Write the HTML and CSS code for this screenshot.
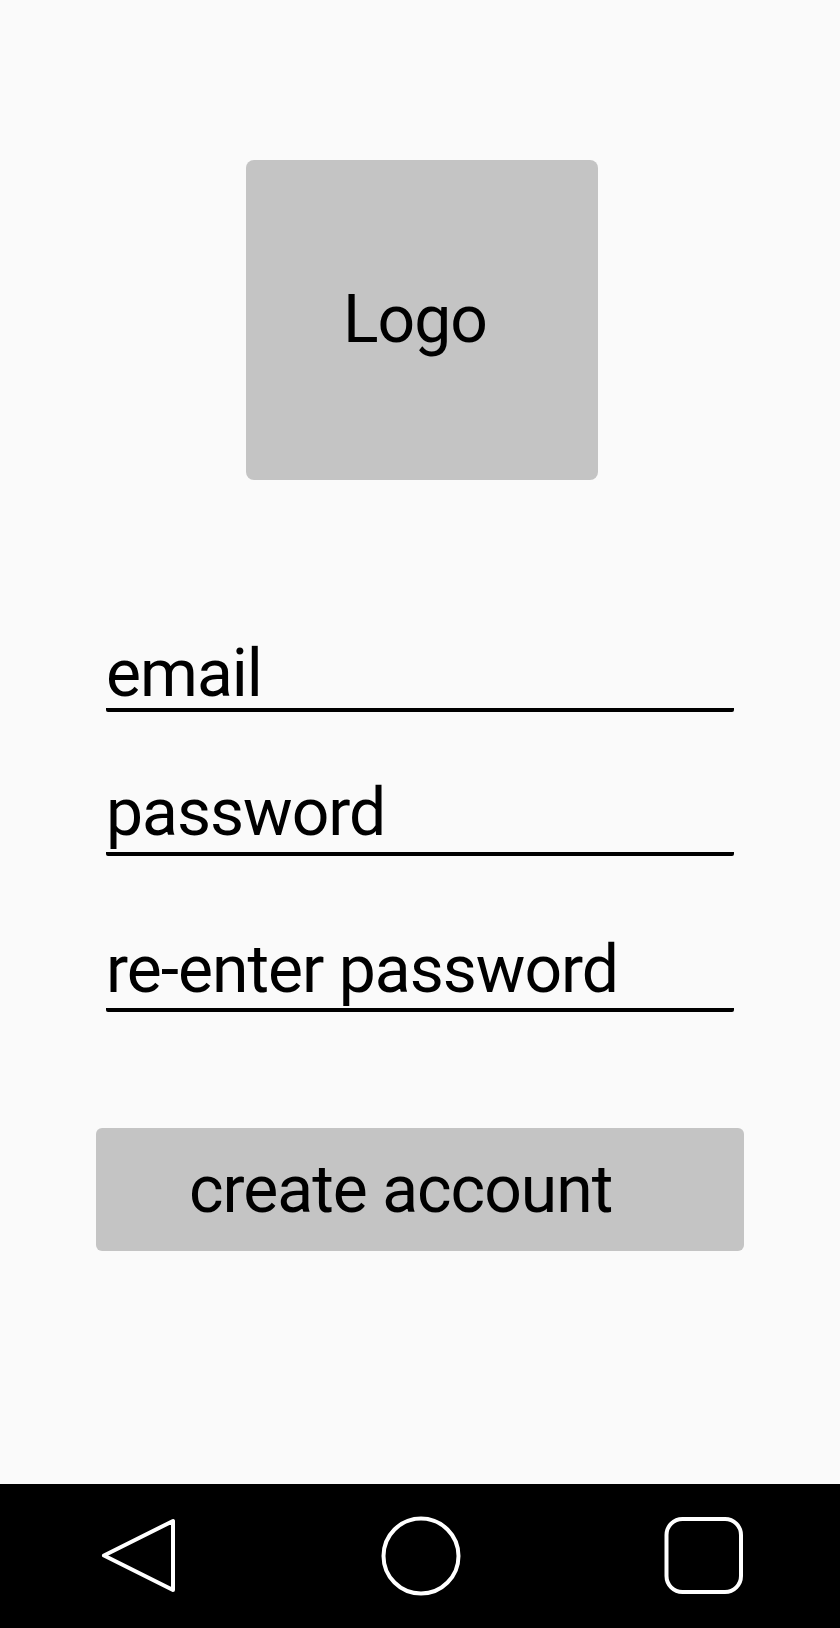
FILE: index.html
```html
<!DOCTYPE html>
<html lang="en">
<head>
<meta charset="utf-8">
<title>Create account</title>
<link rel="stylesheet" href="styles.css">
</head>
<body>
<div class="screen">
  <main class="content">
    <div class="logo">Logo</div>
    <form class="form">
      <div class="field field-email">email</div>
      <div class="field field-password">password</div>
      <div class="field field-repeat">re-enter password</div>
      <button type="button" class="btn">create account</button>
    </form>
  </main>
  <nav class="navbar">
    <svg class="nav-icon" width="80" height="80" viewBox="0 0 80 80">
      <polygon points="6,39.5 75,5 75,74" fill="none" stroke="#fff" stroke-width="4" stroke-linejoin="round"/>
    </svg>
    <svg class="nav-icon" width="80" height="80" viewBox="0 0 80 80">
      <circle cx="40" cy="40" r="37.5" fill="none" stroke="#fff" stroke-width="4"/>
    </svg>
    <svg class="nav-icon" width="80" height="80" viewBox="0 0 80 80">
      <rect x="2.5" y="3" width="74.5" height="73" rx="16" ry="16" fill="none" stroke="#fff" stroke-width="4"/>
    </svg>
  </nav>
</div>
</body>
</html>
```
FILE: styles.css
```css
* {
  box-sizing: border-box;
}

html, body {
  margin: 0;
  padding: 0;
}

body {
  background: #fafafa;
  font-family: Roboto, "Noto Sans", sans-serif;
  color: #000;
}

.screen {
  width: 840px;
  height: 1628px;
  display: flex;
  flex-direction: column;
}

.content {
  flex: 1;
  padding-top: 160px;
}

.logo {
  width: 352px;
  height: 320px;
  margin-left: 246px;
  background: #c4c4c4;
  border-radius: 8px;
  display: flex;
  align-items: center;
  justify-content: center;
  font-size: 66px;
  line-height: 66px;
  letter-spacing: -1px;
  padding-right: 14px;
}

.form {
  display: flex;
  flex-direction: column;
  margin: 0;
}

.field {
  width: 628px;
  margin-left: 106px;
  font-size: 66px;
  line-height: 66px;
  letter-spacing: -1px;
  border-bottom: 4px solid #000;
  border-radius: 0 0 2px 2px;
}

.field-email {
  margin-top: 161px;
  padding-bottom: 1px;
}

.field-password {
  margin-top: 68px;
  padding-bottom: 6px;
}

.field-repeat {
  margin-top: 81px;
  padding-bottom: 5px;
}

.btn {
  margin-top: 116px;
  margin-left: 96px;
  width: 648px;
  height: 123px;
  background: #c4c4c4;
  border: none;
  border-radius: 6px;
  font-family: Roboto, "Noto Sans", sans-serif;
  font-size: 66px;
  line-height: 66px;
  letter-spacing: -1px;
  color: #000;
  text-align: left;
  padding: 0 0 0 93px;
  display: flex;
  align-items: center;
}

.navbar {
  height: 144px;
  background: #000;
  display: flex;
  align-items: center;
  justify-content: space-between;
  padding: 0 96px 0 98px;
}

.nav-icon {
  display: block;
}
```
